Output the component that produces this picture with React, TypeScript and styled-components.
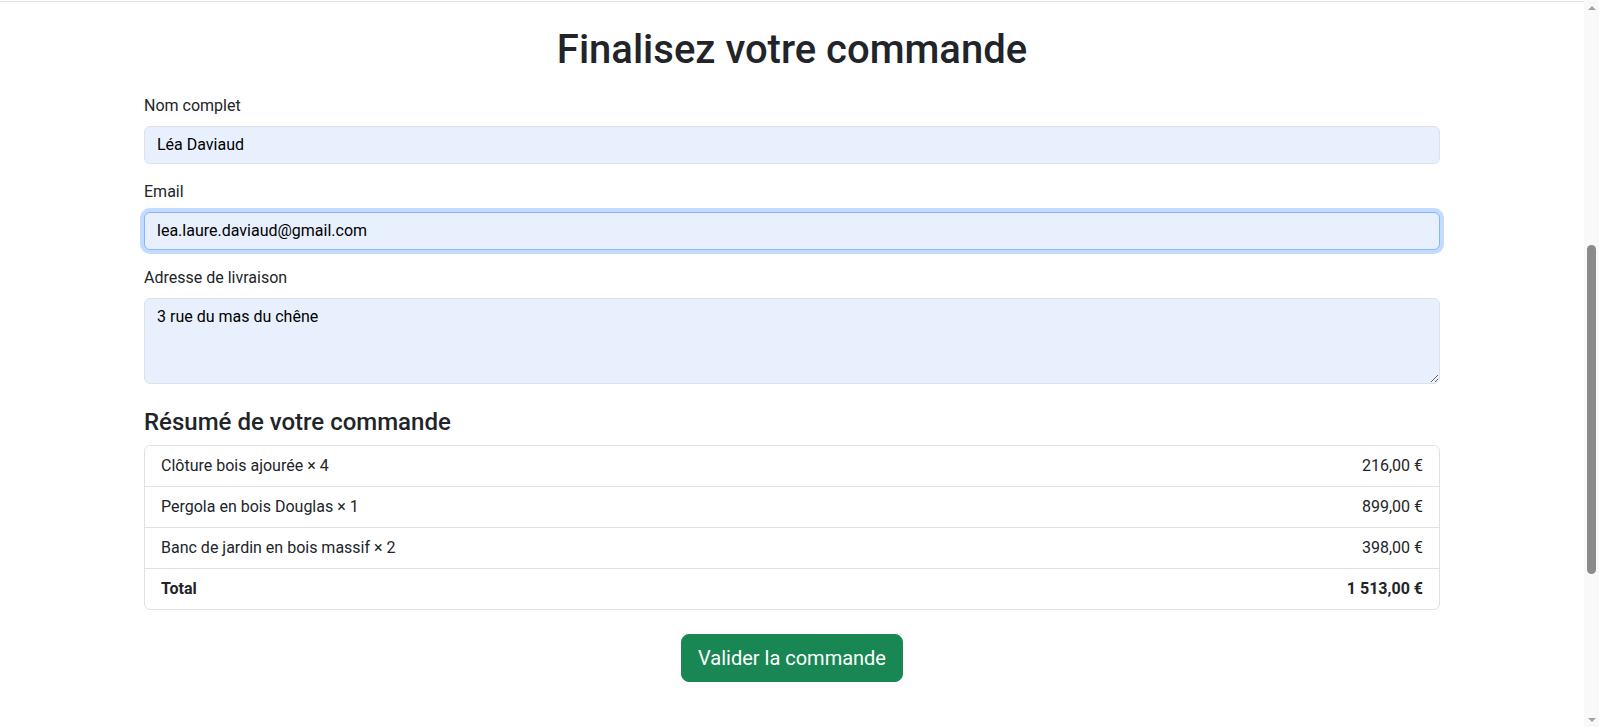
import React from "react";
import styled, { createGlobalStyle } from "styled-components";

const GlobalStyle = createGlobalStyle`
  *, *::before, *::after { box-sizing: border-box; }
  html, body { margin: 0; padding: 0; height: 100%; overflow: hidden; background: #fff; }
  body {
    font-family: Roboto, "Liberation Sans", Arial, sans-serif;
    font-size: 16px;
    line-height: 1.5;
    color: #212529;
  }
  #root { height: 100%; }
`;

const Page = styled.div`
  display: flex;
  height: 100vh;
`;

const Main = styled.main`
  flex: 1;
  min-width: 0;
  display: flex;
  flex-direction: column;
`;

const TopRule = styled.div`
  margin-top: 1px;
  height: 1px;
  background: #e3e3e3;
`;

const Container = styled.div`
  width: 100%;
  max-width: 1320px;
  margin: 0 auto;
  padding: 24px 12px 0;
`;

const Title = styled.h1`
  margin: 0 0 20px;
  font-size: 40px;
  font-weight: 500;
  line-height: 1.2;
  text-align: center;
  color: #212529;
`;

const Field = styled.div`
  margin-bottom: 16px;
`;

const Label = styled.label`
  display: block;
  margin-bottom: 8px;
  font-size: 16px;
  line-height: 1.5;
  color: #212529;
`;

const Input = styled.input<{ $focused?: boolean }>`
  display: block;
  width: 100%;
  padding: 6px 12px;
  font-family: inherit;
  font-size: 16px;
  line-height: 1.5;
  color: #000;
  background: #e8f0fe;
  border: 1px solid ${(p) => (p.$focused ? "#86b7fe" : "#dee2e6")};
  border-radius: 6px;
  outline: none;
  box-shadow: ${(p) => (p.$focused ? "0 0 0 4px rgba(13, 110, 253, 0.25)" : "none")};
`;

const TextArea = styled.textarea`
  display: block;
  width: 100%;
  padding: 6px 12px;
  font-family: inherit;
  font-size: 16px;
  line-height: 1.5;
  color: #000;
  background: #e8f0fe;
  border: 1px solid #dee2e6;
  border-radius: 6px;
  outline: none;
  resize: vertical;
`;

const SectionTitle = styled.h4`
  margin: 24px 0 8px;
  font-size: 24px;
  font-weight: 500;
  line-height: 1.2;
  color: #212529;
`;

const List = styled.ul`
  list-style: none;
  margin: 0;
  padding: 0;
  border: 1px solid #dee2e6;
  border-radius: 6px;
`;

const Item = styled.li<{ $bold?: boolean }>`
  display: flex;
  justify-content: space-between;
  align-items: center;
  padding: 8px 16px;
  font-size: 16px;
  line-height: 1.5;
  font-weight: ${(p) => (p.$bold ? 700 : 400)};
  color: #212529;
  & + & {
    border-top: 1px solid #dee2e6;
  }
`;

const Actions = styled.div`
  display: flex;
  justify-content: center;
  margin-top: 24px;
`;

const Button = styled.button`
  padding: 8px 16px;
  font-family: inherit;
  font-size: 20px;
  line-height: 1.5;
  font-weight: 400;
  color: #fff;
  background: #198754;
  border: 1px solid #198754;
  border-radius: 8px;
  cursor: pointer;
`;

const ScrollTrack = styled.div`
  flex: none;
  width: 15px;
  height: 100%;
  background: #f9f9f9;
  display: flex;
  flex-direction: column;
  align-items: center;
`;

const ArrowBox = styled.div`
  flex: none;
  height: 15px;
  width: 100%;
  display: flex;
  align-items: center;
  justify-content: center;
`;

const Arrow = styled.div<{ $down?: boolean }>`
  width: 0;
  height: 0;
  border-left: 4px solid transparent;
  border-right: 4px solid transparent;
  ${(p) =>
    p.$down
      ? "border-top: 4px solid #a3a3a3;"
      : "border-bottom: 4px solid #a3a3a3;"}
`;

const ThumbArea = styled.div`
  flex: 1;
  width: 100%;
  display: flex;
  justify-content: center;
`;

const Thumb = styled.div`
  margin-top: 230px;
  width: 9px;
  height: 329px;
  border-radius: 5px;
  background: #8b8b8b;
`;

const items = [
  { name: "Clôture bois ajourée × 4", price: "216,00 €" },
  { name: "Pergola en bois Douglas × 1", price: "899,00 €" },
  { name: "Banc de jardin en bois massif × 2", price: "398,00 €" },
];

export default function App() {
  return (
    <>
      <GlobalStyle />
      <Page>
        <Main>
          <TopRule />
          <Container>
            <Title>Finalisez votre commande</Title>
            <form onSubmit={(e) => e.preventDefault()}>
              <Field>
                <Label htmlFor="name">Nom complet</Label>
                <Input id="name" type="text" defaultValue="Léa Daviaud" />
              </Field>
              <Field>
                <Label htmlFor="email">Email</Label>
                <Input
                  id="email"
                  type="email"
                  defaultValue="lea.laure.daviaud@gmail.com"
                  $focused
                />
              </Field>
              <Field>
                <Label htmlFor="address">Adresse de livraison</Label>
                <TextArea id="address" rows={3} defaultValue="3 rue du mas du chêne" />
              </Field>
              <SectionTitle>Résumé de votre commande</SectionTitle>
              <List>
                {items.map((it) => (
                  <Item key={it.name}>
                    <span>{it.name}</span>
                    <span>{it.price}</span>
                  </Item>
                ))}
                <Item $bold>
                  <span>Total</span>
                  <span>1 513,00 €</span>
                </Item>
              </List>
              <Actions>
                <Button type="submit">Valider la commande</Button>
              </Actions>
            </form>
          </Container>
        </Main>
        <ScrollTrack>
          <ArrowBox>
            <Arrow />
          </ArrowBox>
          <ThumbArea>
            <Thumb />
          </ThumbArea>
          <ArrowBox>
            <Arrow $down />
          </ArrowBox>
        </ScrollTrack>
      </Page>
    </>
  );
}
